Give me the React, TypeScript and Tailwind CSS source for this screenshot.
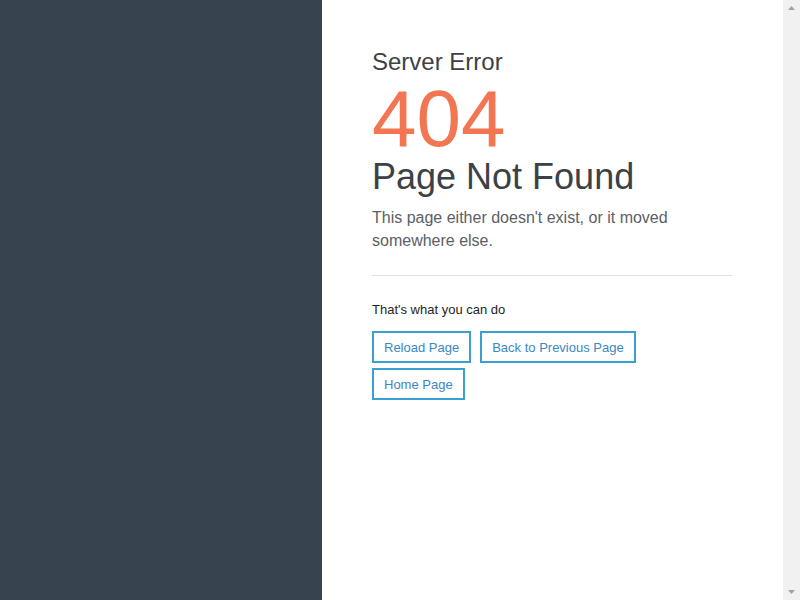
export default function App() {
	const actions = ["Reload Page", "Back to Previous Page", "Home Page"];

	return (
		<div className="flex h-[600px] w-[800px] overflow-hidden bg-white font-['Liberation_Sans',Arial,sans-serif]">
			<aside className="w-[322px] shrink-0 bg-[#37434f]" />

			<main className="flex flex-1 justify-center pr-[1px]">
				<div className="w-[360px] pt-[50px]">
					<h2 className="text-[24px] leading-none text-[#3c4146]">Server Error</h2>
					<h1 className="mt-[5px] text-[80px] leading-none text-[#f27651]">404</h1>
					<h3 className="text-[36px] leading-none text-[#3c4146]">Page Not Found</h3>
					<p className="mt-[11px] text-[16px] leading-[23px] text-[#5c6065]">
						This page either doesn't exist, or it moved somewhere else.
					</p>

					<hr className="mt-[23px] border-0 border-t border-[#dedede]" />

					<p className="mt-[27px] text-[13px] leading-none text-[#1e1e1e]">
						That's what you can do
					</p>

					<div className="mt-[15px] flex flex-wrap gap-x-[9px] gap-y-[5px]">
						{actions.map((label) => (
							<button
								key={label}
								className="h-[32px] border-2 border-[#3aa0d2] px-[10px] text-[13px] leading-none text-[#3a88c6]">
								{label}
							</button>
						))}
					</div>
				</div>
			</main>

			<div className="flex w-[17px] shrink-0 flex-col items-center justify-between bg-[#f1f1f1] py-[6px]">
				<svg width="7" height="4" viewBox="0 0 7 4">
					<path d="M3.5 0 L7 4 L0 4 Z" fill="#a3a3a3" />
				</svg>
				<svg width="7" height="4" viewBox="0 0 7 4">
					<path d="M0 0 L7 0 L3.5 4 Z" fill="#a3a3a3" />
				</svg>
			</div>
		</div>
	);
}
